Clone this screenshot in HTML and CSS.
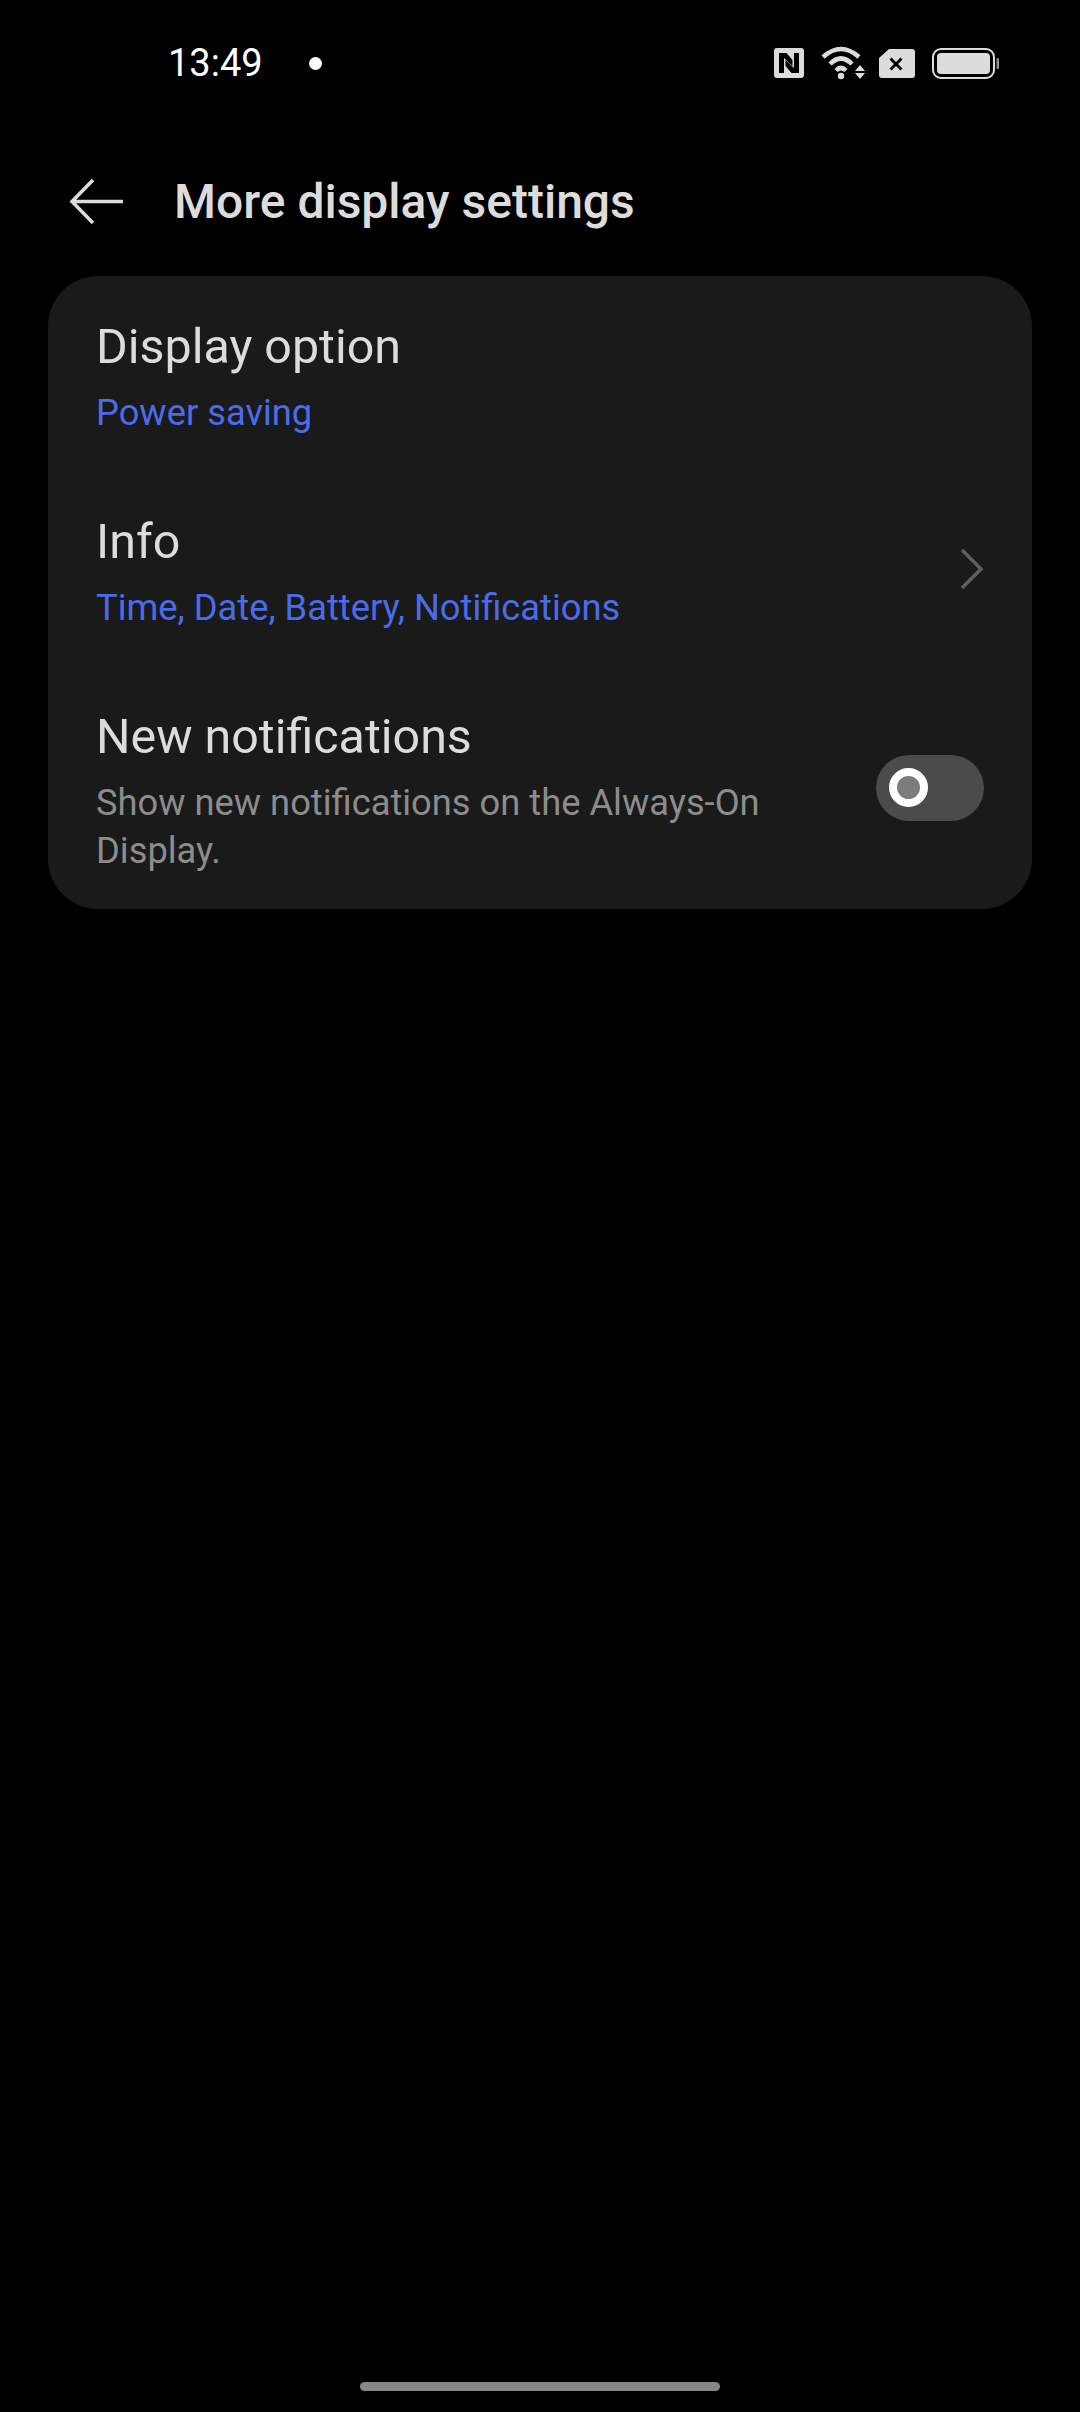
FILE: index.html
```html
<!DOCTYPE html>
<html>
  <head>
    <meta charset="utf-8">
    <title>More display settings</title>
    <link rel="stylesheet" href="styles.css">
  </head>
  <body>
    <!-- Status bar -->
    <div class="statusBar">
      <span class="clock">13:49</span>
      <span class="dot"></span>
      <div class="statusIcons">
        <svg class="iconNfc" viewBox="0 0 30 30">
          <path fill="#dcdcdc" fill-rule="evenodd" d="M3 0H27a3 3 0 0 1 3 3V27a3 3 0 0 1-3 3H3a3 3 0 0 1-3-3V3a3 3 0 0 1 3-3ZM5 25V5H12.500L18.500 12V18L10 10V25ZM25 5V25H17.500L11.500 18V12L20 20V5Z"/>
        </svg>
        <svg class="iconWifi" viewBox="0 0 48 34">
          <g fill="none" stroke="#dcdcdc" stroke-width="4.500">
            <path d="M3 11Q21 -5 39 11"/>
            <path d="M10 18Q21 7 32 18"/>
            <path d="M16 24.500Q21 19.500 26 24.500"/>
          </g>
          <circle cx="21" cy="30" r="3.200" fill="#dcdcdc"/>
          <path fill="#dcdcdc" d="M40 19L35 25H45ZM35 27L40 33L45 27Z"/>
        </svg>
        <svg class="iconSim" viewBox="0 0 36 29">
          <path fill="#dcdcdc" fill-rule="evenodd" d="M10 0H33a3 3 0 0 1 3 3V26a3 3 0 0 1-3 3H3a3 3 0 0 1-3-3V9ZM12.500 8.500L10.500 10.500L15 15L10.500 19.500L12.500 21.500L17 17L21.500 21.500L23.500 19.500L19 15L23.500 10.500L21.500 8.500L17 13Z"/>
        </svg>
        <svg class="iconBattery" viewBox="0 0 68 31">
          <rect x="1" y="1" width="61" height="29" rx="8" fill="none" stroke="#dcdcdc" stroke-width="2"/>
          <rect x="5" y="5" width="53" height="21" rx="4" fill="#dcdcdc"/>
          <rect x="64.500" y="10" width="2.500" height="11" rx="1" fill="#8c8c8c"/>
        </svg>
      </div>
    </div>

    <!-- Title bar -->
    <div class="appBar">
      <svg class="iconBack" viewBox="0 0 54 47">
        <path fill="none" stroke="#dcdcdc" stroke-width="3.500" d="M54 23.500H4M24 2L3 23.500L24 45"/>
      </svg>
      <h1>More display settings</h1>
    </div>

    <!-- Settings card -->
    <div class="card">
      <div class="row">
        <div class="rowText">
          <div class="rowTitle">Display option</div>
          <div class="rowValue">Power saving</div>
        </div>
      </div>
      <div class="row">
        <div class="rowText">
          <div class="rowTitle">Info</div>
          <div class="rowValue">Time, Date, Battery, Notifications</div>
        </div>
        <svg class="iconChevron" viewBox="0 0 24 42">
          <path fill="none" stroke="#5e5e5e" stroke-width="3.500" d="M2 2L21 21L2 40"/>
        </svg>
      </div>
      <div class="row rowTall">
        <div class="rowText">
          <div class="rowTitle">New notifications</div>
          <div class="rowDesc">Show new notifications on the Always-On Display.</div>
        </div>
        <div class="toggle"><span class="knob"></span></div>
      </div>
    </div>

    <!-- Gesture bar -->
    <div class="homeBar"></div>
  </body>
</html>
```

FILE: styles.css
```css
body {
  display: flex;
  flex-direction: column;
  height: 2412px;
  margin: 0;
  background: #000;
  font-family: Roboto, sans-serif;
  overflow: hidden;
}

.statusBar {
  display: flex;
  align-items: center;
  height: 48px;
  margin-top: 39px;
  padding: 0 80px 0 168px;
  color: #fff;
}

.clock {
  font-size: 38px;
  width: 141px;
}

.dot {
  width: 13px;
  height: 13px;
  border-radius: 50%;
  background: #fff;
}

.statusIcons {
  display: flex;
  align-items: center;
  margin-left: auto;
}

.iconNfc {
  width: 30px;
  height: 30px;
}

.iconWifi {
  width: 48px;
  height: 34px;
  margin-left: 16px;
}

.iconSim {
  width: 36px;
  height: 29px;
  margin-left: 11px;
}

.iconBattery {
  width: 68px;
  height: 31px;
  margin-left: 17px;
}

.appBar {
  display: flex;
  align-items: center;
  height: 60px;
  margin-top: 84px;
  padding-left: 69px;
}

.iconBack {
  width: 54px;
  height: 47px;
}

h1 {
  margin: 0 0 0 51px;
  font-size: 48px;
  font-weight: 500;
  color: #dcdcdc;
}

.card {
  margin: 45px 48px 0;
  height: 633px;
  border-radius: 50px;
  background: #1a1a1a;
}

.row {
  display: flex;
  align-items: center;
  justify-content: space-between;
  padding: 0 48px 0 48px;
  height: 195px;
}

.rowTall {
  height: 243px;
}

.rowText {
  width: 700px;
  margin-top: 10px;
}

.rowTall .rowText {
  margin-top: 3px;
}

.rowTitle {
  font-size: 48.400px;
  line-height: 68px;
  color: #dcdcdc;
}

.rowValue {
  font-size: 36.300px;
  line-height: 64px;
  color: #4a6cea;
}

.rowDesc {
  font-size: 36.300px;
  line-height: 48px;
  margin-top: 8px;
  color: #8c8c8c;
}

.iconChevron {
  width: 24px;
  height: 42px;
}

.toggle {
  display: flex;
  align-items: center;
  width: 108px;
  height: 66px;
  padding-left: 13px;
  box-sizing: border-box;
  border-radius: 33px;
  background: #4b4b4b;
}

.knob {
  width: 23px;
  height: 23px;
  border: 8px solid #fff;
  border-radius: 50%;
  background: #7c7c7c;
}

.homeBar {
  width: 360px;
  height: 9px;
  margin: auto auto 21px;
  border-radius: 5px;
  background: #868686;
}
```
